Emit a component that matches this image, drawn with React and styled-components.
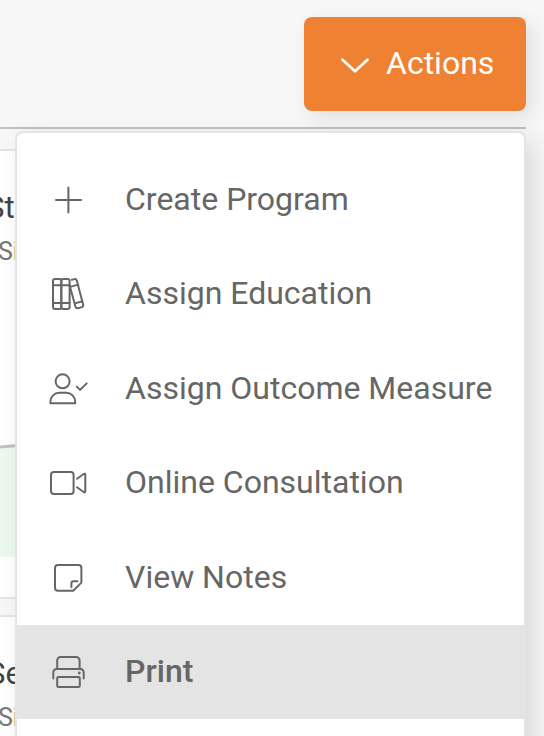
import React from 'react';
import styled, { createGlobalStyle } from 'styled-components';

const GlobalStyle = createGlobalStyle`
  * {
    box-sizing: border-box;
  }
  body {
    margin: 0;
    background-color: #f7f7f7;
    font-family: Roboto, "Liberation Sans", sans-serif;
    overflow: hidden;
  }
`;

const Page = styled.div`
  position: relative;
  width: 544px;
  height: 736px;
  overflow: hidden;
  background-color: #f7f7f7;
`;
const Header = styled.header`
  display: flex;
  justify-content: flex-end;
  width: 526px;
  height: 129px;
  padding-top: 17px;
  border-bottom: 2px solid #bfc0bf;
`;
const ActionsButton = styled.button`
  display: flex;
  align-items: center;
  width: 222px;
  height: 94px;
  padding: 0 0 0 36px;
  border: none;
  border-radius: 8px;
  background-color: #ef8132;
  box-shadow: 6px 6px 20px rgba(0, 0, 0, 0.1);
  color: white;
  font-family: inherit;
  font-size: 32px;
  line-height: 92px;
`;
const ButtonLabel = styled.span`
  height: 94px;
  margin-left: 16px;
`;
const Chevron = styled.svg`
  width: 30px;
  height: 18px;
  margin-top: 4px;
  fill: none;
  stroke: white;
  stroke-width: 2.8;
  stroke-linecap: round;
  stroke-linejoin: round;
`;

/* Content cards, mostly hidden under the menu */
const Cards = styled.main`
  display: flex;
  flex-direction: column;
  gap: 16px;
  width: 526px;
  padding-top: 20px;
`;
const Card = styled.section`
  height: 450px;
  padding-top: 35px;
  border-top: 2px solid #e4e4e4;
  border-bottom: 2px solid #e4e4e4;
  background-color: white;
`;
const CardTitle = styled.h2`
  height: 44px;
  margin: 0 0 0 ${({ $offset }) => $offset}px;
  color: #444444;
  font-size: 31px;
  font-weight: 400;
  line-height: 44px;
`;
const CardText = styled.p`
  height: 40px;
  margin: 0 0 0 -2px;
  color: #777777;
  font-size: 25px;
  line-height: 43px;
`;
const Chart = styled.svg`
  display: block;
  width: 100%;
  height: 117px;
  margin-top: 170px;
`;

const Menu = styled.ul`
  position: absolute;
  top: 131px;
  left: 15px;
  width: 511px;
  height: 680px;
  margin: 0;
  padding: 20px 0 0;
  list-style: none;
  background-color: white;
  border: 2px solid #e4e4e4;
  border-radius: 8px;
  box-shadow: 8px 8px 24px rgba(0, 0, 0, 0.12);
`;
const MenuItem = styled.li`
  display: flex;
  align-items: flex-start;
  height: ${({ $tall }) => ($tall ? 95 : 94)}px;
  padding: 25px 0 0 29px;
  color: #666666;
  background-color: ${({ $active }) => ($active ? '#e4e4e4' : 'transparent')};
  font-weight: ${({ $active }) => ($active ? 500 : 400)};
`;
const Icon = styled.svg`
  flex: none;
  width: 44px;
  height: 44px;
  fill: none;
  stroke: currentColor;
  stroke-width: 2;
  stroke-linecap: round;
  stroke-linejoin: round;
`;
const Label = styled.span`
  margin-left: 35px;
  font-size: 32px;
  line-height: 42px;
  white-space: nowrap;
`;

const PlusIcon = () => (
  <Icon viewBox="6 8 44 44">
    <path d="M16 30H41M28.4 17.6v25" />
  </Icon>
);
const BooksIcon = () => (
  <Icon viewBox="6 7 44 44">
    <rect x="13" y="13.9" width="8.3" height="30.2" rx="2" />
    <rect x="21.3" y="13.9" width="8.3" height="30.2" rx="2" />
    <path d="M13 20.3h16.6M13 38h16.6" />
    <path d="M31.8 14.8l2.6-.7a2 2 0 0 1 2.4 1.4l6.4 24.2a2 2 0 0 1-1.4 2.4l-3.9 1.1a2 2 0 0 1-2.4-1.4L29.6 20.3M31 21.6l7.3-2M35 38.4l7.4-2.1" />
  </Icon>
);
const UserCheckIcon = () => (
  <Icon viewBox="6 7 44 44">
    <circle cx="22.6" cy="21.3" r="7" />
    <path d="M10.4 43.3v-1.6c0-5 4-8.9 9-8.9h6.8c5 0 9 3.9 9 8.9v1.6zM36.8 26.6l3.3 3.3 6.6-6.5" />
  </Icon>
);
const VideoIcon = () => (
  <Icon viewBox="6 8 44 44">
    <rect x="11" y="19" width="22.6" height="22" rx="3" />
    <path d="M37 25.7l7-4.9c.7-.4 1.3 0 1.3.7v17c0 .7-.6 1.1-1.3.7l-7-4.9" />
  </Icon>
);
const NoteIcon = () => (
  <Icon viewBox="6 8 44 44">
    <path d="M18 17.1h20.4a3 3 0 0 1 3 3V34.6l-8.2 8.2H18a3 3 0 0 1-3-3V20.1a3 3 0 0 1 3-3z" />
    <path d="M31.4 39.2v-4a2 2 0 0 1 2-2h4" />
  </Icon>
);
const PrinterIcon = () => (
  <Icon viewBox="6 8 44 44">
    <path d="M17.2 27v-8.5a3.5 3.5 0 0 1 3.5-3.5h15.4a3.5 3.5 0 0 1 3.5 3.5V27" />
    <path d="M13.3 36.5v-6.2a3.3 3.3 0 0 1 3.3-3.3h23.8a3.3 3.3 0 0 1 3.3 3.3v6.2" />
    <rect x="17.2" y="35" width="22.6" height="10" rx="1.2" />
    <circle cx="39.3" cy="31" r="1.4" fill="currentColor" stroke="none" />
  </Icon>
);

const items = [
  { label: 'Create Program', icon: PlusIcon },
  { label: 'Assign Education', icon: BooksIcon, tall: true },
  { label: 'Assign Outcome Measure', icon: UserCheckIcon },
  { label: 'Online Consultation', icon: VideoIcon, tall: true },
  { label: 'View Notes', icon: NoteIcon },
  { label: 'Print', icon: PrinterIcon, active: true },
];

export default function App() {
  return (
    <Page>
      <GlobalStyle />
      <Header>
        <ActionsButton>
          <Chevron viewBox="0 0 30 18">
            <path d="M2.5 2.8L15 14.2 27.5 2.8" />
          </Chevron>
          <ButtonLabel>Actions</ButtonLabel>
        </ActionsButton>
      </Header>
      <Cards>
        <Card>
          <CardTitle $offset={-14}>St</CardTitle>
          <CardText>Si</CardText>
          <Chart viewBox="0 0 526 117">
            <path d="M0 7L526 -20V117H0z" fill="#edf8ee" />
            <path d="M0 7L18 5.5" fill="none" stroke="#c0c0c0" strokeWidth="3" />
          </Chart>
        </Card>
        <Card>
          <CardTitle $offset={-13}>Se</CardTitle>
          <CardText>Si</CardText>
        </Card>
      </Cards>
      <Menu>
        {items.map(({ label, icon: ItemIcon, tall, active }) => (
          <MenuItem key={label} $tall={tall} $active={active}>
            <ItemIcon />
            <Label>{label}</Label>
          </MenuItem>
        ))}
      </Menu>
    </Page>
  );
}
